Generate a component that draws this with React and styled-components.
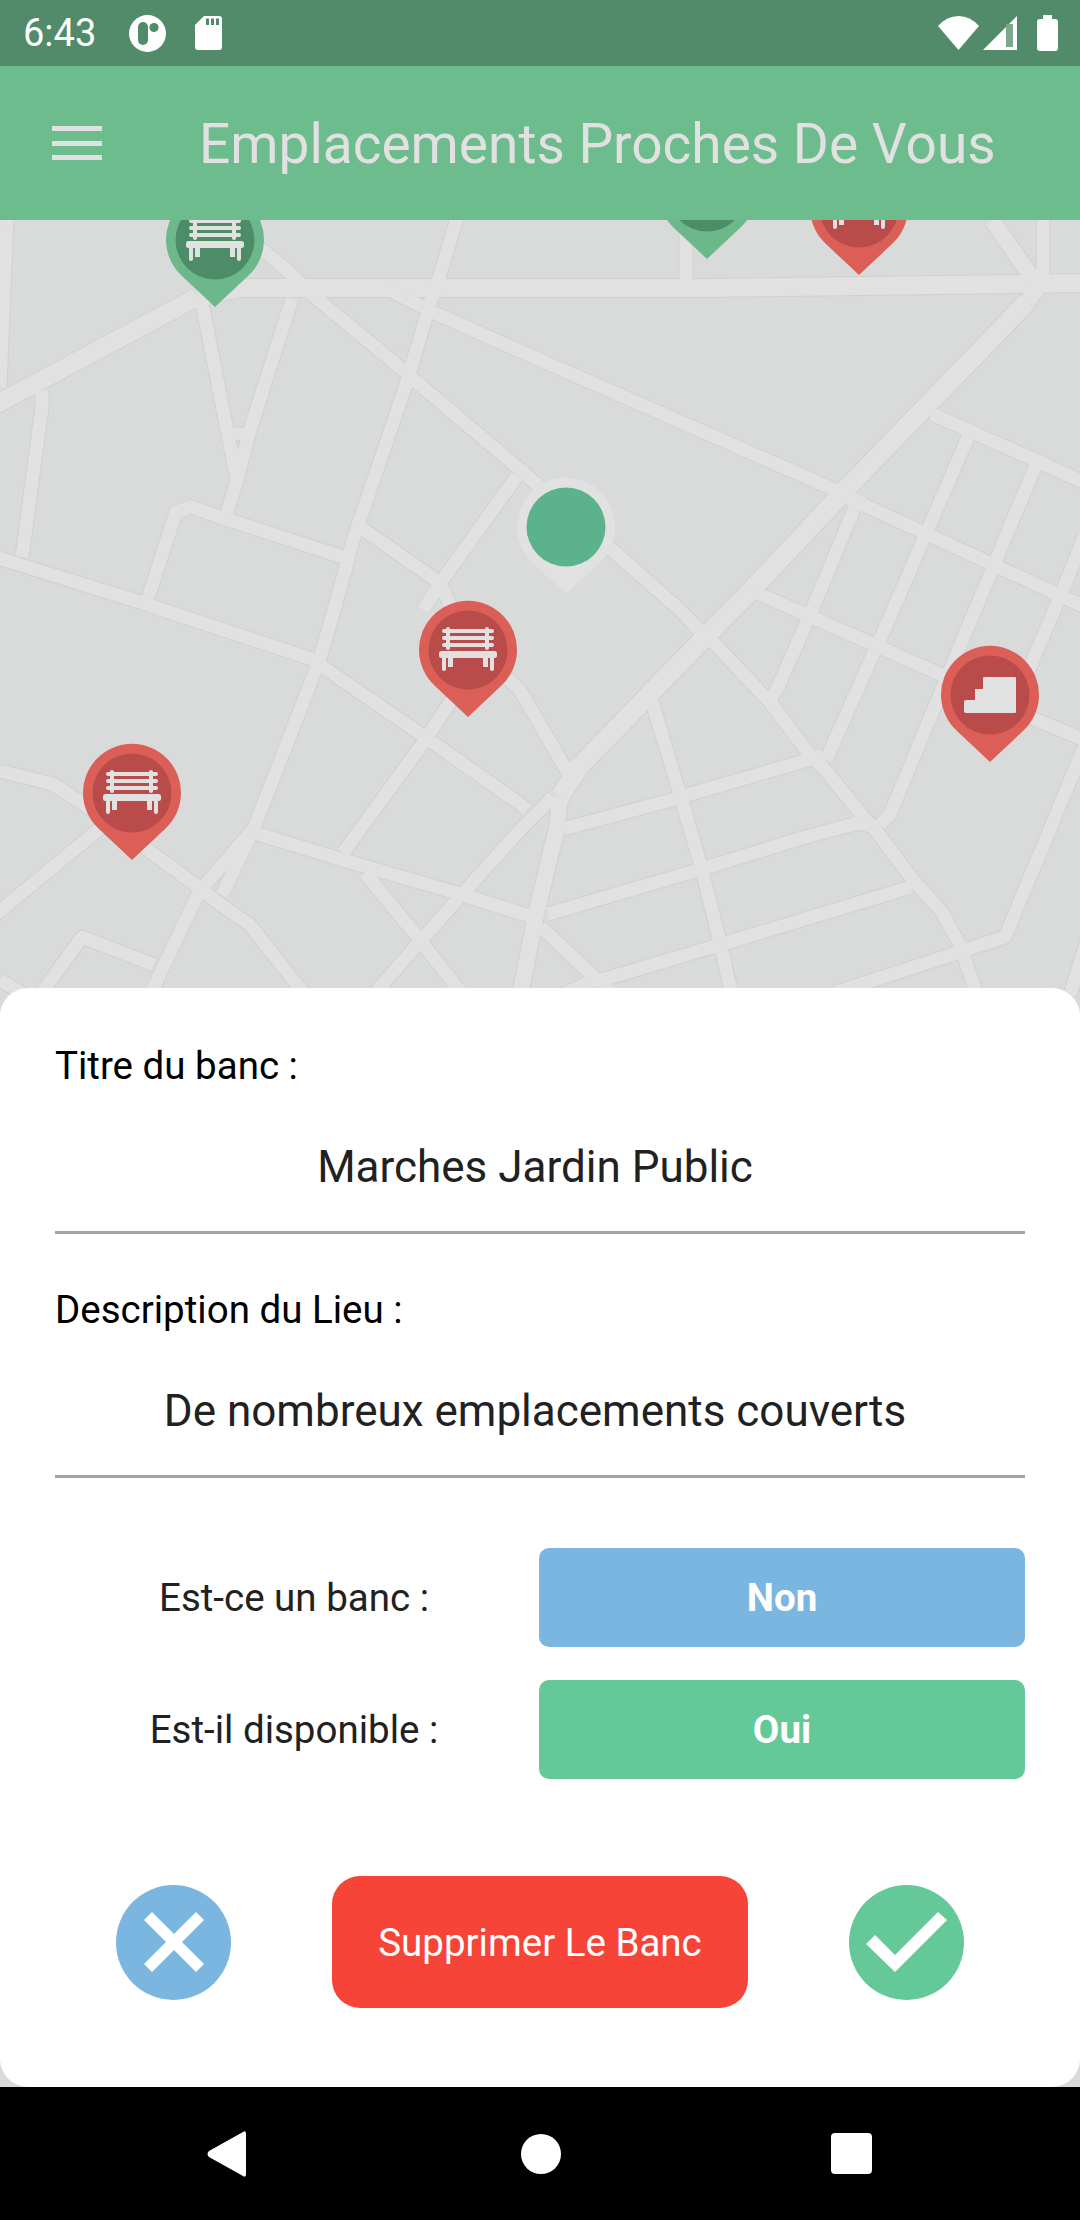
import React from "react";
import styled, { createGlobalStyle } from "styled-components";

const GlobalStyle = createGlobalStyle`
  html, body {
    margin: 0;
    padding: 0;
    background: #000;
  }
  * {
    box-sizing: border-box;
  }
`;

// road centre lines, in page coordinates
const ROADS = [
  // wide ones
  { w: 19, pts: "1027,302 848,487 838,498 742,600 702,640 578,768 560,797" },
  { w: 16, pts: "560,797 557,827 537,910 520,995" },
  { w: 18, pts: "197,297 240,288 700,288 1020,284 1085,283" },
  { w: 18, pts: "-5,405 197,297" },
  { w: 16, pts: "992,220 1028,272 1040,285 1027,302" },
  // long diagonals
  { w: 13, pts: "240,232 287,270 315,297 403,370 413,379 517,467 610,548 680,610 702,633 713,642 765,697 770,702 810,755 822,766 865,819 874,828 913,880 942,912 960,945 977,995" },
  { w: 13, pts: "385,288 435,313 520,351 833,489 853,500 1085,607" },
  { w: 13, pts: "932,414 1035,460 1085,483" },
  { w: 13, pts: "750,590 807,615 942,675 1000,705 1085,740" },
  { w: 13, pts: "457,218 439,278 432,297 411,368 407,382 353,540 347,563 334,610 320,658 316,669 254,828" },
  { w: 13, pts: "254,828 205,885 197,896 150,995" },
  { w: 13, pts: "254,828 222,895" },
  { w: 13, pts: "-5,557 143,603 163,610 315,660 323,667 425,737 520,804 527,810" },
  { w: 13, pts: "553,797 520,830 457,900 425,936 373,995" },
  { w: 13, pts: "258,834 350,862 457,893 520,913 537,918" },
  { w: 13, pts: "548,914 695,871 708,867 802,838 858,823 875,827" },
  { w: 13, pts: "563,829 675,799 687,795 808,760 822,755" },
  { w: 13, pts: "650,700 653,705 679,791 700,863 719,938 732,995" },
  { w: 13, pts: "541,927 593,976 620,1000" },
  { w: 13, pts: "560,996 592,981 605,979 719,945 911,887" },
  { w: 13, pts: "837,992 957,953 968,949 1005,937 1085,745" },
  { w: 13, pts: "1040,455 975,610 943,687 890,814 880,825" },
  { w: 13, pts: "968,437 893,610 826,760" },
  { w: 13, pts: "1085,535 1062,592 1030,667 1010,700" },
  { w: 13, pts: "860,495 812,610 778,687 770,700" },
  { w: 13, pts: "1070,995 1090,931" },
  { w: 13, pts: "360,527 440,583 466,640 520,690 568,773" },
  { w: 13, pts: "517,476 441,582 423,610" },
  { w: 13, pts: "467,677 423,743 343,853" },
  { w: 13, pts: "0,771 53,784 100,815 200,888 217,902 250,925 305,995" },
  { w: 13, pts: "365,873 416,935 463,995" },
  { w: 13, pts: "148,598 176,512 191,507 223,518 343,557" },
  { w: 13, pts: "202,303 227,430 237,480 227,513" },
  { w: 13, pts: "292,299 250,430 237,480" },
  { w: 12, pts: "233,433 248,435" },
  { w: 13, pts: "42,390 42,407 22,557" },
  { w: 13, pts: "7,218 0,387" },
  { w: 13, pts: "1043,218 1043,283" },
  { w: 13, pts: "686,218 686,288" },
  { w: 13, pts: "-5,915 98,830 130,805" },
  { w: 13, pts: "40,995 82,937 154,965" },
  { w: 13, pts: "0,980 25,995" },
];

const PINS = [
  { x: 215, y: 240, tone: "green", icon: "bench" },
  { x: 707, y: 192, tone: "green", icon: "bench" },
  { x: 859, y: 208, tone: "red", icon: "bench" },
  { x: 566, y: 527, tone: "here" },
  { x: 468, y: 650, tone: "red", icon: "bench" },
  { x: 132, y: 793, tone: "red", icon: "bench" },
  { x: 990, y: 695, tone: "red", icon: "stairs" },
];

const TONES = {
  green: { outer: "#6db88a", inner: "#4c8d68" },
  red: { outer: "#db5f56", inner: "#b94b4b" },
  here: { outer: "#e1e1e1", inner: "#5bb28c" },
};

function BenchGlyph() {
  return (
    <g fill="#e1e1e1">
      <rect x="-26" y="-21" width="52" height="4" rx="2" />
      <rect x="-26" y="-14" width="52" height="4" rx="2" />
      <rect x="-26" y="-7" width="52" height="4" rx="2" />
      <rect x="-22" y="-23" width="4" height="23" rx="2" />
      <rect x="17" y="-23" width="4" height="23" rx="2" />
      <rect x="-29" y="1" width="58" height="7" rx="2.5" />
      <rect x="-26" y="4" width="4" height="17" rx="2" />
      <rect x="-20" y="4" width="5" height="13" />
      <rect x="15" y="4" width="5" height="13" />
      <rect x="22" y="4" width="4" height="17" rx="2" />
    </g>
  );
}

function StairsGlyph() {
  return (
    <path
      fill="#e1e1e1"
      d="M-7,-17 Q-7,-18 -6,-18 L25,-18 Q26,-18 26,-17 L26,17 Q26,18 25,18 L-24,18 Q-26,18 -26,16 L-26,7 Q-26,5 -24,5 L-15,5 L-15,-6 L-7,-6 Z"
    />
  );
}

function MapPin({ x, y, tone, icon }) {
  const c = TONES[tone];
  return (
    <PinBox $x={x} $y={y} viewBox="-50 -50 100 120">
      <path
        fill={c.outer}
        d="M0,67 L-33,36 A49,49 0 1 1 33,36 Z"
      />
      <circle r="39.5" fill={c.inner} />
      {icon === "bench" && <BenchGlyph />}
      {icon === "stairs" && <StairsGlyph />}
    </PinBox>
  );
}

function MapDrawing() {
  return (
    <MapSvg viewBox="0 220 1080 1867">
      <rect x="0" y="220" width="1080" height="1867" fill="#d9dbda" />
      <g fill="none" strokeLinejoin="round" stroke="#cfd1d0">
        {ROADS.map((r, i) => (
          <polyline key={i} points={r.pts} strokeWidth={r.w + 2} />
        ))}
      </g>
      <g fill="none" strokeLinejoin="round" stroke="#e1e1e1">
        {ROADS.map((r, i) => (
          <polyline key={i} points={r.pts} strokeWidth={r.w} />
        ))}
      </g>
    </MapSvg>
  );
}

export default function App() {
  return (
    <Screen>
      <GlobalStyle />
      <StatusBar>
        <Time>6:43</Time>
        <StatusIcon width="37" height="37" viewBox="0 0 37 37" $left={33}>
          <circle cx="18.5" cy="18.5" r="18.5" fill="#fff" />
          <rect x="9" y="7" width="10" height="23" rx="5" fill="#528b6a" />
          <circle cx="25" cy="12.5" r="4.6" fill="#528b6a" />
        </StatusIcon>
        <StatusIcon width="27" height="34" viewBox="0 0 27 34" $left={29}>
          <path d="M9,0 H24 Q27,0 27,3 V31 Q27,34 24,34 H3 Q0,34 0,31 V9 Z" fill="#fff" />
          <rect x="11" y="2.5" width="3" height="6.5" fill="#528b6a" />
          <rect x="16" y="2.5" width="3" height="6.5" fill="#528b6a" />
          <rect x="21" y="2.5" width="3" height="6.5" fill="#528b6a" />
        </StatusIcon>
        <StatusRight>
          <StatusIcon width="41" height="34" viewBox="0 0 41 34">
            <path d="M20.5,34 L0,10 Q9,0 20.5,0 Q32,0 41,10 Z" fill="#fff" />
          </StatusIcon>
          <StatusIcon width="34" height="34" viewBox="0 0 34 34" $left={4}>
            <path d="M34,0 V34 H0 Z" fill="#fff" />
            <path d="M23,8 H30 V31 H23 Z" fill="#7fa68e" />
          </StatusIcon>
          <StatusIcon width="21" height="36" viewBox="0 0 21 36" $left={20}>
            <path d="M6,0 H15 V4 H18 Q21,4 21,7 V33 Q21,36 18,36 H3 Q0,36 0,33 V7 Q0,4 3,4 H6 Z" fill="#fff" />
          </StatusIcon>
        </StatusRight>
      </StatusBar>

      <AppBar>
        <MenuIcon>
          <MenuLine />
          <MenuLine />
          <MenuLine />
        </MenuIcon>
        <Title>Emplacements Proches De Vous</Title>
      </AppBar>

      <Main>
        <MapDrawing />
        {PINS.map((p, i) => (
          <MapPin key={i} {...p} />
        ))}
        <Sheet>
          <Field>
            <FieldLabel>Titre du banc :</FieldLabel>
            <FieldValue>Marches Jardin Public</FieldValue>
          </Field>
          <Field>
            <FieldLabel>Description du Lieu :</FieldLabel>
            <FieldValue>De nombreux emplacements couverts</FieldValue>
          </Field>
          <Options>
            <OptionRow>
              <OptionLabel>Est-ce un banc :</OptionLabel>
              <OptionButton $color="#7ab6df">Non</OptionButton>
            </OptionRow>
            <OptionRow>
              <OptionLabel>Est-il disponible :</OptionLabel>
              <OptionButton $color="#64c899">Oui</OptionButton>
            </OptionRow>
          </Options>
          <Actions>
            <RoundButton $color="#7ab6df">
              <svg width="60" height="60" viewBox="0 0 60 60">
                <path
                  d="M8,0 L30,22 L52,0 L60,8 L38,30 L60,52 L52,60 L30,38 L8,60 L0,52 L22,30 L0,8 Z"
                  fill="#fff"
                />
              </svg>
            </RoundButton>
            <DeleteButton>Supprimer Le Banc</DeleteButton>
            <RoundButton $color="#64c899">
              <svg width="81" height="60" viewBox="0 0 81 60">
                <path d="M0,32 L9,23 L29,43 L72,0 L81,8 L29,60 Z" fill="#fff" />
              </svg>
            </RoundButton>
          </Actions>
        </Sheet>
      </Main>

      <NavBar>
        <svg width="40" height="46" viewBox="0 0 40 46">
          <path
            d="M36,1 Q39,-1 39,3 V43 Q39,47 36,45 L2,26 Q-1,23 2,20 Z"
            fill="#fff"
          />
        </svg>
        <NavHome />
        <NavRecents />
      </NavBar>
    </Screen>
  );
}

const Screen = styled.div`
  width: 1080px;
  height: 2220px;
  display: flex;
  flex-direction: column;
  overflow: hidden;
  font-family: Roboto, "Liberation Sans", sans-serif;
`;

const StatusBar = styled.div`
  height: 66px;
  flex: none;
  display: flex;
  align-items: center;
  padding: 0 22px 0 23px;
  background: #528b6a;
`;

const Time = styled.span`
  font-size: 38px;
  color: #fff;
`;

const StatusIcon = styled.svg`
  flex: none;
  display: block;
  margin-left: ${(p) => p.$left || 0}px;
`;

const StatusRight = styled.div`
  margin-left: auto;
  display: flex;
  align-items: center;
`;

const AppBar = styled.header`
  height: 154px;
  flex: none;
  display: flex;
  align-items: center;
  padding-left: 52px;
  background: #6dbc8d;
  position: relative;
  z-index: 2;
`;

const MenuIcon = styled.div`
  width: 50px;
  height: 34px;
  display: flex;
  flex-direction: column;
  justify-content: space-between;
`;

const MenuLine = styled.div`
  height: 5px;
  background: #e1e1e1;
`;

const Title = styled.h1`
  margin: 2px 0 0 97px;
  font-size: 55px;
  font-weight: 400;
  color: #e1e1e1;
  white-space: nowrap;
`;

const Main = styled.main`
  flex: 1;
  position: relative;
  overflow: hidden;
  display: flex;
  flex-direction: column;
  justify-content: flex-end;
`;

const MapSvg = styled.svg`
  position: absolute;
  left: 0;
  top: 0;
  width: 1080px;
  height: 1867px;
`;

const PinBox = styled.svg`
  position: absolute;
  left: ${(p) => p.$x - 50}px;
  top: ${(p) => p.$y - 220 - 50}px;
  width: 100px;
  height: 120px;
`;

const Sheet = styled.section`
  position: relative;
  height: 1099px;
  padding: 0 55px;
  background: #fff;
  border-radius: 28px;
  display: flex;
  flex-direction: column;
`;

const Field = styled.div`
  padding-top: 53px;
  & + & {
    padding-top: 51px;
  }
`;

const FieldLabel = styled.div`
  font-size: 38.5px;
  line-height: 50px;
  color: #000;
`;

const FieldValue = styled.div`
  height: 143px;
  padding: 11px 10px 0 0;
  font-size: 44px;
  line-height: 130px;
  text-align: center;
  color: #212121;
  border-bottom: 3px solid #a3a3a3;
`;

const Options = styled.div`
  margin-top: 70px;
  display: flex;
  flex-direction: column;
  gap: 33px;
`;

const OptionRow = styled.div`
  display: grid;
  grid-template-columns: 484px 486px;
  align-items: center;
`;

const OptionLabel = styled.div`
  padding-right: 6px;
  font-size: 38.5px;
  color: #212121;
  text-align: center;
`;

const OptionButton = styled.div`
  height: 99px;
  border-radius: 10px;
  display: flex;
  align-items: center;
  justify-content: center;
  font-size: 38.5px;
  font-weight: 700;
  color: #fff;
  background: ${(p) => p.$color};
`;

const Actions = styled.div`
  margin: 97px -55px 0;
  padding: 0 116px;
  display: flex;
  align-items: center;
  justify-content: space-between;
`;

const RoundButton = styled.div`
  width: 115px;
  height: 115px;
  border-radius: 50%;
  display: flex;
  align-items: center;
  justify-content: center;
  background: ${(p) => p.$color};
`;

const DeleteButton = styled.div`
  width: 416px;
  height: 132px;
  border-radius: 28px;
  display: flex;
  align-items: center;
  justify-content: center;
  font-size: 38.5px;
  color: #fff;
  background: #f64438;
`;

const NavBar = styled.nav`
  height: 133px;
  flex: none;
  display: flex;
  align-items: center;
  padding-left: 207px;
  background: #000;
`;

const NavHome = styled.div`
  width: 40px;
  height: 40px;
  margin-left: 274px;
  border-radius: 50%;
  background: #fff;
`;

const NavRecents = styled.div`
  width: 41px;
  height: 41px;
  margin-left: 270px;
  border-radius: 4px;
  background: #fff;
`;
